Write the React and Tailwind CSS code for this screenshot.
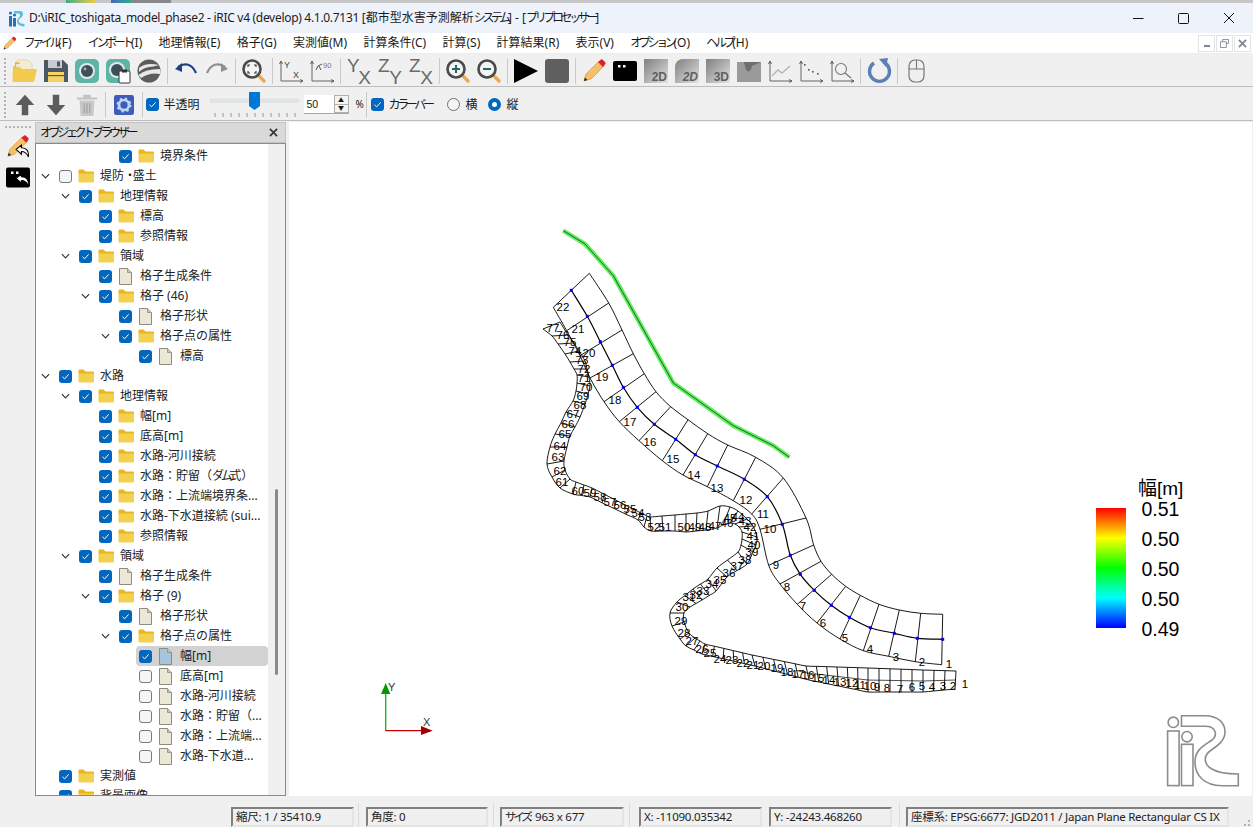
import React from "react";

const MENUS = ["ファイル(F)", "インポート(I)", "地理情報(E)", "格子(G)", "実測値(M)", "計算条件(C)", "計算(S)", "計算結果(R)", "表示(V)", "オプション(O)", "ヘルプ(H)"];

// level, label, icon, arrow, checked
const TREE = [
  [3, "境界条件", "folder", false, true],
  [0, "堤防・盛土", "folder", true, false],
  [1, "地理情報", "folder", true, true],
  [2, "標高", "folder", false, true],
  [2, "参照情報", "folder", false, true],
  [1, "領域", "folder", true, true],
  [2, "格子生成条件", "doc", false, true],
  [2, "格子 (46)", "folder", true, true],
  [3, "格子形状", "doc", false, true],
  [3, "格子点の属性", "folder", true, true],
  [4, "標高", "doc", false, true],
  [0, "水路", "folder", true, true],
  [1, "地理情報", "folder", true, true],
  [2, "幅[m]", "folder", false, true],
  [2, "底高[m]", "folder", false, true],
  [2, "水路-河川接続", "folder", false, true],
  [2, "水路：貯留（ダム式）", "folder", false, true],
  [2, "水路：上流端境界条...", "folder", false, true],
  [2, "水路-下水道接続 (sui...", "folder", false, true],
  [2, "参照情報", "folder", false, true],
  [1, "領域", "folder", true, true],
  [2, "格子生成条件", "doc", false, true],
  [2, "格子 (9)", "folder", true, true],
  [3, "格子形状", "doc", false, true],
  [3, "格子点の属性", "folder", true, true],
  [4, "幅[m]", "docblue", false, true],
  [4, "底高[m]", "doc", false, false],
  [4, "水路-河川接続", "doc", false, false],
  [4, "水路：貯留（...", "doc", false, false],
  [4, "水路：上流端...", "doc", false, false],
  [4, "水路-下水道...", "doc", false, false],
  [0, "実測値", "folder", false, true],
  [0, "背景画像", "folder", false, true],
];

// big grid, rows 1..22: top edge, blue centre points, bottom edge, label
const BIG = [
  [942.7, 615.3, 942.7, 640.3, 941.7, 665.7, 949, 665],
  [920.7, 614.3, 917.3, 639.3, 915.3, 662.7, 922, 663],
  [899.3, 611, 894.3, 634.3, 888.7, 657.3, 896, 658],
  [879, 605.3, 870.3, 628.7, 863.3, 651.7, 870, 650],
  [860.3, 596.3, 849.3, 618.3, 840, 640, 845, 639],
  [845.7, 587.3, 831.3, 606.3, 817, 624, 823, 624],
  [831.7, 575.3, 814.3, 591.3, 797.3, 605.3, 803, 607],
  [821, 562.3, 800.3, 575.3, 780, 585, 787, 588],
  [813.7, 546, 790.3, 556.3, 768.7, 566.3, 776, 566],
  [806, 519, 782.3, 525.3, 760, 530.3, 770, 530],
  [783.3, 479, 767.3, 497.7, 751.7, 515, 763, 515],
  [755.7, 458.3, 744.3, 480.3, 733.3, 501.7, 746, 501],
  [727.7, 446, 717.3, 467, 707.3, 487.7, 717, 489],
  [707.7, 434.7, 695.3, 455.7, 683, 476, 694, 476],
  [688, 420.7, 675.7, 440.3, 662.3, 461.7, 673, 460],
  [670.7, 407.7, 654.3, 425.3, 639, 441.7, 650, 443],
  [656, 392.7, 637.3, 408.3, 619.3, 422.7, 630, 423],
  [644.3, 374.7, 623.3, 388.3, 604, 402.7, 615, 401],
  [633.3, 354.7, 612.3, 366.3, 590, 379, 602, 378],
  [622, 331, 600.3, 342.7, 580, 356.7, 589, 354],
  [608.7, 304, 587.3, 317.3, 566.7, 331.7, 578, 330],
  [589.3, 274.3, 571.3, 291.3, 553.3, 308.3, 563, 308],
];

// small channel key rows: row, inner edge x,y, outer edge x,y
const SMALL_KEYS = [
  [1, 956, 672, 955, 690], [4, 923, 671, 923, 693], [9, 868, 669, 868, 693], [15, 806, 667, 809, 681],
  [20, 752, 656, 755, 667], [25, 705, 645, 702, 655], [27, 695, 639, 686, 647], [28, 689, 634, 680, 640],
  [29, 684, 623, 672, 627], [30, 684, 614, 670, 614], [31, 690, 608, 677, 603], [33, 702, 601, 693, 590],
  [35, 716, 592, 708, 580], [36, 727, 578, 717, 569], [38, 747, 565, 738, 553], [39, 753, 553, 741, 546],
  [40, 756, 546, 742, 540], [41, 757, 538, 742, 533], [42, 753, 527, 739, 528], [43, 747, 520, 735, 525],
  [44, 738, 512, 730, 524], [45, 730, 508, 723, 526], [46, 720, 507, 717, 529], [47, 708, 512, 706, 531],
  [48, 697, 514, 696, 532], [49, 686, 515, 686, 533], [50, 675, 516, 675, 532], [51, 662, 517, 663, 532],
  [52, 650, 518, 651, 532], [53, 647, 517, 644, 528], [54, 641, 514, 638, 521], [58, 592, 489, 590, 498],
  [60, 576, 483, 573, 495], [61, 570, 480, 560, 489], [62, 565, 471, 552, 478], [63, 564, 462, 547, 465],
  [64, 567, 448, 550, 448], [65, 570, 437, 555, 435], [66, 575, 428, 561, 424], [67, 580, 418, 566, 413],
  [68, 585, 405, 573, 402], [69, 588, 395, 576, 392], [70, 590, 387, 577, 384], [71, 589, 378, 577, 376],
  [72, 587, 370, 574, 370], [73, 585, 362, 570, 363], [74, 579, 352, 565, 355], [75, 574, 344, 558, 345],
  [76, 568, 336, 552, 337], [77, 560, 323, 543, 330],
];

const SMALL_LABELS = [
  [965, 685], [953, 687], [943, 687], [932, 688], [922, 687], [912, 688], [900, 690], [887, 689], [877, 688], [870, 687],
  [860, 686], [852, 684], [840, 683], [829, 681], [818, 679], [808, 676], [798, 675], [787, 673], [777, 669], [764, 667],
  [753, 666], [743, 664], [732, 661], [720, 660], [710, 654], [702, 650], [692, 642], [684, 634], [681, 622], [682, 608],
  [689, 598], [696, 596], [703, 592], [712, 585], [720, 581], [729, 574], [737, 567], [745, 561], [752, 553], [754, 546],
  [753, 537], [750, 528], [745, 522], [738, 518], [730, 519], [727, 524], [715, 527], [705, 528], [695, 528], [684, 528],
  [665, 528], [654, 528], [645, 518], [638, 514], [630, 510], [620, 506], [610, 503], [600, 498], [590, 494], [578, 492],
  [562, 483], [560, 472], [558, 458], [560, 447], [565, 435], [568, 425], [573, 415], [580, 406], [583, 397], [586, 388],
  [584, 379], [584, 370], [582, 361], [575, 352], [570, 343], [563, 336], [553, 329],
];

// the app's UI font has narrow kana, so katakana runs get squeezed
const T = ({ children }) =>
  children.split(/([\u30A0-\u30FF]+)/).map((s, i) =>
    i % 2 ? (
      <span key={i} className="tracking-[-0.28em]">{s}</span>
    ) : (
      s
    )
  );

const smallRow = (row) => {
  for (let i = 0; i < SMALL_KEYS.length - 1; i++) {
    const a = SMALL_KEYS[i];
    const b = SMALL_KEYS[i + 1];
    if (row >= a[0] && row <= b[0]) {
      const t = (row - a[0]) / (b[0] - a[0]);
      return [1, 2, 3, 4].map((k) => a[k] + (b[k] - a[k]) * t);
    }
  }
  return SMALL_KEYS[0].slice(1);
};

// catmull-rom through the points, so the edges look like curves
const smooth = (pts) => {
  let d = `M${pts[0][0]} ${pts[0][1]}`;
  for (let i = 0; i < pts.length - 1; i++) {
    const p0 = pts[Math.max(i - 1, 0)];
    const p1 = pts[i];
    const p2 = pts[i + 1];
    const p3 = pts[Math.min(i + 2, pts.length - 1)];
    d += ` C${p1[0] + (p2[0] - p0[0]) / 6} ${p1[1] + (p2[1] - p0[1]) / 6} ${p2[0] - (p3[0] - p1[0]) / 6} ${p2[1] - (p3[1] - p1[1]) / 6} ${p2[0]} ${p2[1]}`;
  }
  return d;
};

const GREEN = "563.3,231.7 585,245 613.3,276.7 673.3,384 733.3,426.7 773.3,446.7 789.3,458.3";

const Mesh = () => {
  const rows = Array.from({ length: 77 }, (_, i) => smallRow(i + 1));
  return (
    <g fill="none" stroke="#000" strokeWidth="0.9">
      <polyline points={GREEN} stroke="#5cf05c" strokeWidth="4.5" />
      <polyline points={GREEN} strokeWidth="0.6" />

      {BIG.map((r, i) => (
        <line key={i} x1={r[0]} y1={r[1]} x2={r[4]} y2={r[5]} />
      ))}
      <path d={smooth(BIG.map((r) => [r[0], r[1]]))} />
      <path d={smooth(BIG.map((r) => [r[2], r[3]]))} strokeWidth="1.2" />
      <path d={smooth(BIG.map((r) => [r[4], r[5]]))} />
      {BIG.map((r, i) => (
        <rect key={i} x={r[2] - 1.5} y={r[3] - 1.5} width="3" height="3" fill="#0000ff" stroke="none" />
      ))}

      {rows.map((r, i) => (
        <line key={i} x1={r[0]} y1={r[1]} x2={r[2]} y2={r[3]} />
      ))}
      <path d={smooth(rows.map((r) => [r[0], r[1]]))} />
      <path d={smooth(rows.slice(0, 16).map((r) => [(r[0] + r[2]) / 2, (r[1] + r[3]) / 2]))} strokeWidth="0.7" />
      <path d={smooth(rows.map((r) => [r[2], r[3]]))} />

      <g fill="#000" stroke="none" fontSize="11.5" textAnchor="middle" dominantBaseline="central" className="font-['Liberation_Sans',sans-serif]">
        {BIG.map((r, i) => (
          <text key={i} x={r[6]} y={r[7]}>{i + 1}</text>
        ))}
        {SMALL_LABELS.map((p, i) => (
          <text key={i} x={p[0]} y={p[1]}>{i + 1}</text>
        ))}
      </g>
    </g>
  );
};

const Canvas = () => (
  <svg viewBox="289 123 963 675" className="w-[963px] h-[675px] bg-white block">
    <defs>
      <linearGradient id="legend" x1="0" y1="0" x2="0" y2="1">
        <stop offset="0" stopColor="#ff0000" />
        <stop offset="0.25" stopColor="#ffff00" />
        <stop offset="0.5" stopColor="#00ff00" />
        <stop offset="0.75" stopColor="#00ffff" />
        <stop offset="1" stopColor="#0000ff" />
      </linearGradient>
    </defs>
    <Mesh />
    <line x1="385.7" y1="732" x2="385.7" y2="695" stroke="#00c000" strokeWidth="1.3" />
    <polygon points="385.7,684 381,695 390.3,695" fill="#009a00" />
    <line x1="385.7" y1="731.7" x2="422" y2="731.7" stroke="#d00000" strokeWidth="1.3" />
    <polygon points="432.7,731.7 421,727 421,736" fill="#a00000" />
    <g fontSize="11" fill="#333" className="font-['Liberation_Sans',sans-serif]">
      <text x="388" y="692">Y</text>
      <text x="423" y="727">X</text>
    </g>

    <rect x="1096" y="509" width="30" height="120" fill="url(#legend)" />
    <g fill="#000" className="font-['Liberation_Sans','Noto_Sans_CJK_JP',sans-serif]">
      <text x="1138" y="496" fontSize="19">幅[m]</text>
      {["0.51", "0.50", "0.50", "0.50", "0.49"].map((t, i) => (
        <text key={i} x="1141.5" y={517 + i * 30} fontSize="19.5">{t}</text>
      ))}
    </g>

    <g fill="#fff" stroke="#8c8c8c" strokeWidth="1.6">
      <circle cx="1173.3" cy="723.3" r="5.2" />
      <rect x="1167.6" y="732" width="11.5" height="54.6" />
      <circle cx="1187" cy="737.7" r="5.2" />
      <rect x="1181.5" y="745.3" width="11.5" height="41.3" />
      <path d="M1181.5 716.7 H1205 C1218 716.7 1225 724 1225 733 C1225 742 1217 747 1210 752 C1203 757 1204 766 1212 770 C1218 774 1226 775 1238.3 775 V786.7 H1222 C1204 786.7 1195 776 1195 763 C1195 750 1205 746 1212 741 C1218 736 1216 727.3 1205 727.3 H1181.5 Z" />
    </g>
  </svg>
);

const Check = ({ on }) =>
  on ? (
    <span className="w-[13px] h-[13px] rounded-[3px] bg-[#0067c0] flex items-center justify-center shrink-0">
      <svg viewBox="0 0 13 13" className="w-[13px] h-[13px]">
        <path d="M3.5 6.8 L5.6 8.8 L9.6 4.4" fill="none" stroke="#fff" strokeWidth="1" />
      </svg>
    </span>
  ) : (
    <span className="block w-[13px] h-[13px] rounded-[3px] bg-[#f6f6f6] border border-[#7a7a7a] shrink-0" />
  );

const Folder = () => (
  <svg viewBox="0 0 16 14" className="w-4 h-[14px] shrink-0">
    <path d="M0.5 1.5 Q0.5 0.5 1.5 0.5 H5.5 L7.5 2.5 H15 Q16 2.5 16 3.5 V5 H0.5 Z" fill="#eab620" />
    <path d="M0.5 13 V5.2 Q0.5 4.4 1.5 4.4 H15 Q16 4.4 16 5.2 V12.5 Q16 13.5 15 13.5 H1 Z" fill="#f2d050" />
  </svg>
);

const Doc = ({ blue }) => (
  <svg viewBox="0 0 15 17" className="w-[15px] h-[17px] shrink-0">
    <path d="M1.5 0.5 H9.5 L13.5 4.5 V16.5 H1.5 Z" fill={blue ? "#a6c5dc" : "#ece8d8"} stroke="#8b8b80" />
    <path d="M9.5 0.5 V4.5 H13.5" fill="#c9c6b8" stroke="#8b8b80" strokeWidth="0.8" />
  </svg>
);

const TreeRow = ({ level, text, icon, arrow, on }) => {
  const selected = icon === "docblue";
  return (
    <div className="flex items-center h-5 shrink-0" style={{ paddingLeft: 20 * level }}>
      <span className="w-[23px] h-5 flex items-center justify-start pl-[5px] shrink-0">
        {arrow && (
          <svg viewBox="0 0 10 6" className="w-[9px] h-[6px]">
            <path d="M1 1 L5 5 L9 1" fill="none" stroke="#333" strokeWidth="1.3" />
          </svg>
        )}
      </span>
      <div className={`flex flex-1 items-center h-5 pl-[3px] -ml-[3px] rounded-sm whitespace-nowrap ${selected ? "bg-[#d2d2d2]" : ""}`}>
        <Check on={on} />
        <span className="w-[28px] pl-[6px] flex justify-start shrink-0">
          {icon === "folder" ? <Folder /> : <Doc blue={selected} />}
        </span>
        <span className="text-[12px] text-[#222] leading-5"><T>{text}</T></span>
      </div>
    </div>
  );
};

const Sep = () => <span className="w-[1px] h-[26px] mx-[2.5px] bg-[#c9c9c9] shrink-0" />;

const Btn = ({ children }) => <span className="w-[31px] h-[28px] flex items-center justify-center shrink-0">{children}</span>;

const Handle = () => (
  <span className="w-[3px] h-[26px] ml-[4px] shrink-0 border-l-2 border-dotted border-[#b5b5b5]" />
);

const Svg = ({ children, w = 26, h = 26 }) => (
  <svg viewBox="0 0 26 26" width={w} height={h}>
    {children}
  </svg>
);

const Glass = ({ children }) => (
  <Svg>
    <path d="M17 17 L23 23" stroke="#f0a850" strokeWidth="3.4" strokeLinecap="round" />
    <circle cx="11" cy="11" r="8.5" fill="#f4f4f4" stroke="#4a4a4a" strokeWidth="2.6" />
    {children}
  </Svg>
);

const Axes = ({ children }) => (
  <Svg>
    <path d="M3 3 V23 H25 M1.5 6 L3 3 L4.5 6 M22 21.5 L25 23 L22 24.5" fill="none" stroke="#555" strokeWidth="0.9" />
    {children}
  </Svg>
);

const Letters = ({ a, b }) => (
  <span className="relative w-[24px] h-[26px] block font-['Liberation_Sans',sans-serif] text-[#6a6a6a] text-[19px] leading-none">
    <span className="absolute left-0 -top-[2px]">{a}</span>
    <span className="absolute right-0 -bottom-[3px]">{b}</span>
  </span>
);

const Shade = ({ text, tilt }) => (
  <span className={`w-6 h-6 flex items-end justify-end pr-[1px] bg-linear-to-br from-[#808080] to-[#e4e4e4] font-['Liberation_Sans',sans-serif] font-bold text-[12px] leading-[12px] text-[#5f5f5f] ${tilt ? "rounded-tl-lg italic" : ""}`}>
    {text}
  </span>
);

const Terminal = ({ w = 24, h = 20 }) => (
  <svg viewBox="0 0 24 20" width={w} height={h}>
    <rect x="0" y="0" width="24" height="20" rx="2" fill="#000" />
    <rect x="5" y="4" width="2.5" height="2.5" fill="#fff" />
    <rect x="10" y="4" width="2.5" height="2.5" fill="#fff" />
  </svg>
);

const Pencil = ({ size = 26 }) => (
  <svg viewBox="0 0 26 26" width={size} height={size}>
    <path d="M3 23 L5 16 L18 3 L23 8 L10 21 Z" fill="#f6c068" stroke="#e29a3a" strokeWidth="0.8" />
    <path d="M17 4 L20 1.5 Q21 1 22 2 L24.5 4.5 Q25 5.5 24 6.5 L22 9 Z" fill="#d8232a" />
    <path d="M3 23 L3.8 19.5 L6.5 22 Z" fill="#223" />
  </svg>
);

const UndoMark = () => (
  <svg viewBox="0 0 14 14" className="absolute right-0 bottom-0 w-[15px] h-[15px]">
    <path d="M1 5 L6 1 V3.5 C11 3.5 13 6.5 12.5 12 C11 8.5 9.5 7 6 7 V9.5 Z" fill="#fff" stroke="#000" strokeWidth="1" />
  </svg>
);

const Toolbar1 = () => (
  <div className="flex items-center h-[33px] pt-[1px] bg-[#f0f0f0] border-b border-[#bdbdbd] shrink-0">
    <Handle />
    <span className="w-[2.5px] shrink-0" />
    <Btn>
      <Svg>
        <path d="M5 2 H16 L20 6 V14 H5 Z" fill="#f4ecd2" stroke="#d8ccaa" strokeWidth="0.7" />
        <path d="M1 8 H3 V4 Q8 4 8 6 H4 V11 Z" fill="#e8b52e" />
        <path d="M0.5 24 L1 9 H8 L10 11 H25 L22 24 Z" fill="#f2ca4e" />
      </Svg>
    </Btn>
    <Btn>
      <Svg>
        <path d="M1 2 H20 L25 7 V24 H1 Z" fill="#4d5866" />
        <rect x="5" y="2" width="14" height="8" fill="#c8ccd0" />
        <rect x="14" y="3.5" width="3" height="5" fill="#4d5866" />
        <rect x="5" y="14" width="16" height="10" fill="#f6d265" />
        <rect x="5" y="17" width="16" height="1.2" fill="#4d5866" />
      </Svg>
    </Btn>
    <Btn>
      <Svg>
        <rect x="1" y="1" width="24" height="24" rx="5" fill="#5cb5a5" />
        <circle cx="13" cy="13" r="8" fill="#e4e8ea" />
        <circle cx="13" cy="13" r="6" fill="#3e4f5c" />
        <circle cx="11" cy="11" r="1.4" fill="#9fb0ba" />
      </Svg>
    </Btn>
    <Btn>
      <Svg>
        <rect x="1" y="1" width="24" height="24" rx="5" fill="#5cb5a5" />
        <circle cx="12" cy="12" r="8" fill="#e4e8ea" />
        <circle cx="12" cy="12" r="6" fill="#3e4f5c" />
        <rect x="14" y="13" width="11" height="12" rx="1" fill="#fff" stroke="#333" />
        <rect x="17" y="11.5" width="5" height="3" fill="#333" />
      </Svg>
    </Btn>
    <Btn>
      <Svg>
        <circle cx="13" cy="13" r="11.5" fill="#5c5c5c" />
        <path d="M3 10 Q10 4 23 7 Q17 9 13 9 Q7 10 3 14 Z M2.5 17 Q9 11 24 11 Q25 14 24 16 Q14 14 5 20 Z" fill="#e8e8e8" />
      </Svg>
    </Btn>
    <Sep />
    <Btn>
      <Svg>
        <path d="M5 9 C12 4 19 6 23 15" fill="none" stroke="#1f3f86" strokeWidth="2.2" />
        <path d="M2 11 L9 5 L9 14 Z" fill="#1f3f86" />
      </Svg>
    </Btn>
    <Btn>
      <Svg>
        <path d="M21 9 C14 4 7 6 3 15" fill="none" stroke="#8f8f8f" strokeWidth="2.2" />
        <path d="M24 11 L17 5 L17 14 Z" fill="#8f8f8f" />
      </Svg>
    </Btn>
    <Sep />
    <Btn>
      <Glass>
        <path d="M7 9 V7 H9 M13 7 H15 V9 M15 13 V15 H13 M9 15 H7 V13" fill="none" stroke="#333" strokeWidth="1.1" />
      </Glass>
    </Btn>
    <Sep />
    <Btn>
      <Axes>
        <text x="6" y="10" fontSize="9" fill="#444" className="font-['Liberation_Sans',sans-serif]">Y</text>
        <text x="15" y="20" fontSize="9" fill="#444" className="font-['Liberation_Sans',sans-serif]">X</text>
      </Axes>
    </Btn>
    <Btn>
      <Axes>
        <path d="M13 6 Q8 7 7 12 M10 8 L12 12" fill="none" stroke="#444" strokeWidth="0.9" />
        <text x="14" y="10" fontSize="7.5" fill="#777" className="font-['Liberation_Sans',sans-serif]">90</text>
      </Axes>
    </Btn>
    <Sep />
    <Btn><Letters a="Y" b="X" /></Btn>
    <Btn><Letters a="Z" b="Y" /></Btn>
    <Btn><Letters a="Z" b="X" /></Btn>
    <Sep />
    <Btn>
      <Glass>
        <path d="M11 7 V15 M7 11 H15" stroke="#1c6b5e" strokeWidth="2" />
      </Glass>
    </Btn>
    <Btn>
      <Glass>
        <path d="M7 11 H15" stroke="#1c6b5e" strokeWidth="2" />
      </Glass>
    </Btn>
    <Sep />
    <Btn>
      <Svg>
        <path d="M1 1 L25 13 L1 25 Z" fill="#000" />
      </Svg>
    </Btn>
    <Btn>
      <span className="w-6 h-6 rounded-[3px] bg-[#5f5f5f] block" />
    </Btn>
    <Sep />
    <Btn><Pencil /></Btn>
    <Btn><Terminal /></Btn>
    <Btn><Shade text="2D" /></Btn>
    <Btn><Shade text="2D" tilt /></Btn>
    <Btn><Shade text="3D" /></Btn>
    <Btn>
      <Svg>
        <path d="M1 4 H25 V24 H1 Z" fill="#9a9a9a" />
        <path d="M1 4 H8 C10 16 14 16 16 8 L25 4 Z" fill="#6f6f6f" />
      </Svg>
    </Btn>
    <Btn>
      <Axes>
        <path d="M5 18 L11 12 L15 15 L23 8" fill="none" stroke="#b4b4b4" strokeWidth="1.4" />
      </Axes>
    </Btn>
    <Btn>
      <Axes>
        <g fill="#555">
          <rect x="6" y="6" width="1.6" height="1.6" /><rect x="10" y="11" width="1.6" height="1.6" />
          <rect x="14" y="13" width="1.6" height="1.6" /><rect x="19" y="15" width="1.6" height="1.6" />
        </g>
      </Axes>
    </Btn>
    <Btn>
      <Axes>
        <circle cx="12" cy="11" r="5.5" fill="none" stroke="#777" strokeWidth="1.1" />
        <path d="M16 15 L22 20" stroke="#777" strokeWidth="1.3" />
      </Axes>
    </Btn>
    <Sep />
    <Btn>
      <Svg>
        <path d="M8 5 A10 10 0 1 0 19 5" fill="none" stroke="#5a80b4" strokeWidth="3.4" />
        <path d="M13 1 L22 0 L20 9 Z" fill="#5a80b4" />
      </Svg>
    </Btn>
    <Sep />
    <Btn>
      <Svg>
        <rect x="6" y="2" width="15" height="22" rx="6" fill="#f0f0f0" stroke="#777" strokeWidth="1.2" />
        <path d="M6 11 H21 M13.5 2 V11" stroke="#777" strokeWidth="1.1" />
      </Svg>
    </Btn>
  </div>
);

const Slider = () => (
  <svg viewBox="0 0 90 28" width="90" height="28" className="shrink-0">
    <rect x="0.5" y="8" width="88" height="3.5" fill="#e0e6e6" stroke="#d4d8d8" strokeWidth="0.5" />
    <path d="M39 1 H50 V15 L44.5 19 L39 15 Z" fill="#0078d4" />
    {Array.from({ length: 11 }, (_, i) => (
      <line key={i} x1={5 + i * 8} y1="22" x2={5 + i * 8} y2="26" stroke="#8a8a8a" strokeWidth="0.9" />
    ))}
  </svg>
);

const Radio = ({ on }) =>
  on ? (
    <span className="w-[13px] h-[13px] rounded-full bg-[#0067c0] flex items-center justify-center shrink-0">
      <span className="w-[5px] h-[5px] rounded-full bg-white" />
    </span>
  ) : (
    <span className="block w-[13px] h-[13px] rounded-full bg-[#f6f6f6] border border-[#6f6f6f] shrink-0" />
  );

const Toolbar2 = () => (
  <div className="flex items-center h-[33px] mt-[1px] pt-[1px] bg-[#f0f0f0] border-b border-[#bdbdbd] text-[12px] text-[#1a1a1a] shrink-0">
    <Handle />
    <span className="w-[2.5px] shrink-0" />
    <Btn>
      <Svg w={24} h={24}>
        <path d="M13 2 L23 13 H16.5 V24 H9.5 V13 H3 Z" fill="#5c5c5c" />
      </Svg>
    </Btn>
    <Btn>
      <Svg w={24} h={24}>
        <path d="M13 24 L23 13 H16.5 V2 H9.5 V13 H3 Z" fill="#5c5c5c" />
      </Svg>
    </Btn>
    <Btn>
      <Svg w={24} h={24}>
        <path d="M2 5 H24 V7 H2 Z M9 2 H17 V5 H9 Z" fill="#c2c2c2" />
        <path d="M5 8 H21 L20 25 H6 Z" fill="#c8c8c8" />
        <path d="M10 11 V22 M13 11 V22 M16 11 V22" stroke="#9f9f9f" strokeWidth="1.2" />
      </Svg>
    </Btn>
    <Sep />
    <Btn>
      <Svg w={20} h={20}>
        <rect x="0" y="0" width="26" height="26" rx="3" fill="#3f5cb8" />
        <circle cx="13" cy="13" r="6.5" fill="none" stroke="#bcd6f4" strokeWidth="3.5" />
        <circle cx="13" cy="13" r="8.5" fill="none" stroke="#bcd6f4" strokeWidth="2.5" strokeDasharray="3 3.7" />
      </Svg>
    </Btn>
    <Sep />
    <span className="ml-[0px]"><Check on /></span>
    <span className="ml-[5px] w-[42px]">半透明</span>
    <span className="ml-[4px]"><Slider /></span>
    <span className="ml-[4px] h-[19px] w-[45px] flex bg-white border-b border-[#a8a8a8] shrink-0">
      <span className="w-[30px] pl-[3px] text-[10.5px] leading-[19px] font-['Liberation_Sans',sans-serif]">50</span>
      <span className="w-[15px] flex flex-col border border-[#b0b0b0] bg-[#f4f4f4]">
        <span className="flex-1 flex items-center justify-center text-[6px] leading-none border-b border-[#b0b0b0]">▲</span>
        <span className="flex-1 flex items-center justify-center text-[6px] leading-none">▼</span>
      </span>
    </span>
    <span className="ml-[7px] w-[8px] text-[10px]">%</span>
    <span className="w-[1px] h-[26px] ml-[2px] bg-[#c9c9c9]" />
    <span className="ml-[4px]"><Check on /></span>
    <span className="ml-[5px] w-[50px] whitespace-nowrap"><T>カラーバー</T></span>
    <span className="ml-[8px]"><Radio /></span>
    <span className="ml-[6px]">横</span>
    <span className="ml-[10px]"><Radio on /></span>
    <span className="ml-[6px]">縦</span>
  </div>
);

const Gutter = () => (
  <div className="w-[35px] shrink-0 flex flex-col items-center">
    <span className="w-[26px] mt-[4px] border-t-2 border-dotted border-[#b5b5b5]" />
    <span className="relative w-[25px] h-[25px] mt-[6px] block">
      <Pencil size={25} />
      <UndoMark />
    </span>
    <span className="relative w-6 h-[21px] mt-[8px] block">
      <Terminal h={21} />
      <UndoMark />
    </span>
  </div>
);

const Browser = () => (
  <div className="w-[251px] shrink-0 flex flex-col">
    <div className="h-[21px] bg-[#d9d9d9] border border-[#c4c4c4] flex items-center justify-between pl-[4px] pr-[7px] text-[12px] text-[#111] shrink-0">
      <span><T>オブジェクトブラウザー</T></span>
      <svg viewBox="0 0 10 10" className="w-[9px] h-[9px]">
        <path d="M1 1 L9 9 M9 1 L1 9" stroke="#333" strokeWidth="1.8" />
      </svg>
    </div>
    <div className="flex flex-1 min-h-0 border border-[#8a8a8a] bg-white overflow-hidden">
      <div className="flex-1 flex flex-col overflow-hidden pt-[2px]">
        {TREE.map((r, i) => (
          <TreeRow key={i} level={r[0]} text={r[1]} icon={r[2]} arrow={r[3]} on={r[4]} />
        ))}
      </div>
      <div className="w-[17px] shrink-0 bg-[#f0f0f0]">
        <div className="w-[3px] h-[186px] mt-[345px] mx-auto rounded-full bg-[#8a8a8a]" />
      </div>
    </div>
  </div>
);

const Pane = ({ w, children }) => (
  <span className={`h-[20px] flex items-center px-[3px] whitespace-nowrap overflow-hidden text-[11.5px] tracking-[-0.25px] text-[#222] border-2 border-t-[#808080] border-l-[#808080] border-r-[#e4e4e4] border-b-[#e4e4e4] shrink-0 ${w}`}>
    <span><T>{children}</T></span>
  </span>
);

const VLine = ({ m }) => <span className={`w-[1px] h-[28px] bg-[#dcdcdc] shrink-0 ${m}`} />;

const StatusBar = () => (
  <div className="flex-1 flex items-center bg-[#f0f0f0] pl-[231px] pt-[7px] pb-[2px]">
    <Pane w="w-[123px]">縮尺: 1 / 35410.9</Pane>
    <VLine m="mx-[4px]" />
    <span className="w-[3px]" />
    <Pane w="w-[122px]">角度: 0</Pane>
    <VLine m="ml-[5px] mr-[6px]" />
    <Pane w="w-[124px]">サイズ: 963 x 677</Pane>
    <VLine m="ml-[5px] mr-[9px]" />
    <Pane w="w-[123px]">X: -11090.035342</Pane>
    <span className="w-[7px]" />
    <Pane w="w-[123px]">Y: -24243.468260</Pane>
    <VLine m="ml-[7px] mr-[6px]" />
    <Pane w="w-[323px]">座標系: EPSG:6677: JGD2011 / Japan Plane Rectangular CS IX</Pane>
    <svg viewBox="0 0 12 12" className="w-3 h-3 ml-[10px] self-end">
      <g fill="#b4b4b4">
        <rect x="9" y="1" width="2" height="2" /><rect x="5" y="5" width="2" height="2" /><rect x="9" y="5" width="2" height="2" />
        <rect x="1" y="9" width="2" height="2" /><rect x="5" y="9" width="2" height="2" /><rect x="9" y="9" width="2" height="2" />
      </g>
    </svg>
  </div>
);

const MdiButton = ({ children }) => (
  <span className="w-[17px] h-[17px] flex items-center justify-center bg-white border border-[#e4e4e4] shrink-0">{children}</span>
);

export default function App() {
  return (
    <div className="w-[1253px] h-[827px] flex flex-col overflow-hidden bg-[#f0f0f0] font-['Noto_Sans','Noto_Sans_CJK_JP',sans-serif]">
      <div className="h-[3px] flex bg-[#c6c6c6] shrink-0">
        <span className="w-[66px]" />
        <span className="w-[30px] bg-linear-to-r from-[#3a8] to-[#ec3]" />
        <span className="w-[15px]" />
        <span className="w-[20px] bg-linear-to-r from-[#46b] to-[#3a8]" />
        <span className="w-[40px] bg-[#888]" />
      </div>
      <div className="h-[30px] flex items-center bg-[#eef2fb] rounded-tr-lg shrink-0">
        <svg viewBox="0 0 17 17" className="w-[17px] h-[17px] ml-[8px]">
          <circle cx="2.5" cy="3" r="1.6" fill="#2c6fb0" />
          <rect x="1" y="6" width="3" height="10.5" fill="#2c6fb0" />
          <circle cx="6.5" cy="5" r="1.6" fill="#2c6fb0" />
          <rect x="5" y="8" width="3" height="8.5" fill="#2c6fb0" />
          <path d="M6 1 H12 C16 1 16 6 12.5 8 C9.5 10 10 13.5 16.5 14 V16.5 C9 16.5 7.5 11 10.5 8 C12.5 6 13 3.5 10 3.5 H6 Z" fill="#57c0de" />
        </svg>
        <span className="ml-[4px] text-[12px] text-[#1c1c1c] whitespace-nowrap">
          <span className="tracking-[-0.3px]">{"D:\\iRIC_toshigata_model_phase2 - iRIC v4 (develop) 4.1.0.7131 "}</span>
          <T>[都市型水害予測解析システム] - [プリプロセッサー]</T>
        </span>
        <span className="flex-1" />
        <svg viewBox="0 0 105 14" className="w-[105px] h-[14px] mr-[15px]">
          <path d="M0 7.5 H10.5" stroke="#111" strokeWidth="1" />
          <rect x="45.5" y="2.5" width="10" height="10" rx="1" fill="none" stroke="#111" />
          <path d="M91 2 L101 12 M101 2 L91 12" stroke="#111" strokeWidth="1" />
        </svg>
      </div>
      <div className="h-[21px] flex items-center bg-white border-b border-[#ececec] shrink-0">
        <span className="w-[23.5px] pl-[2px] shrink-0"><Pencil size={15} /></span>
        <div className="flex gap-[16.3px] text-[12px] text-[#1a1a1a] whitespace-nowrap">
          {MENUS.map((m) => (
            <span key={m}><T>{m}</T></span>
          ))}
        </div>
        <span className="flex-1" />
        <div className="flex gap-[1px] pr-[2px]">
          <MdiButton><span className="w-[6px] h-[2px] mt-[6px] bg-[#7a8794]" /></MdiButton>
          <MdiButton>
            <svg viewBox="0 0 10 10" className="w-[9px] h-[9px]">
              <path d="M3 2.5 V0.5 H9.5 V5 H7 M0.5 3 H7 V9.5 H0.5 Z" fill="none" stroke="#7a8794" />
            </svg>
          </MdiButton>
          <MdiButton>
            <svg viewBox="0 0 10 10" className="w-[9px] h-[9px]">
              <path d="M1 1 L9 9 M9 1 L1 9" stroke="#7a8794" strokeWidth="2" />
            </svg>
          </MdiButton>
        </div>
      </div>
      <Toolbar1 />
      <Toolbar2 />
      <div className="flex h-[675px] shrink-0 pt-[1px]">
        <Gutter />
        <Browser />
        <span className="w-[3px] shrink-0" />
        <Canvas />
      </div>
      <StatusBar />
    </div>
  );
}
